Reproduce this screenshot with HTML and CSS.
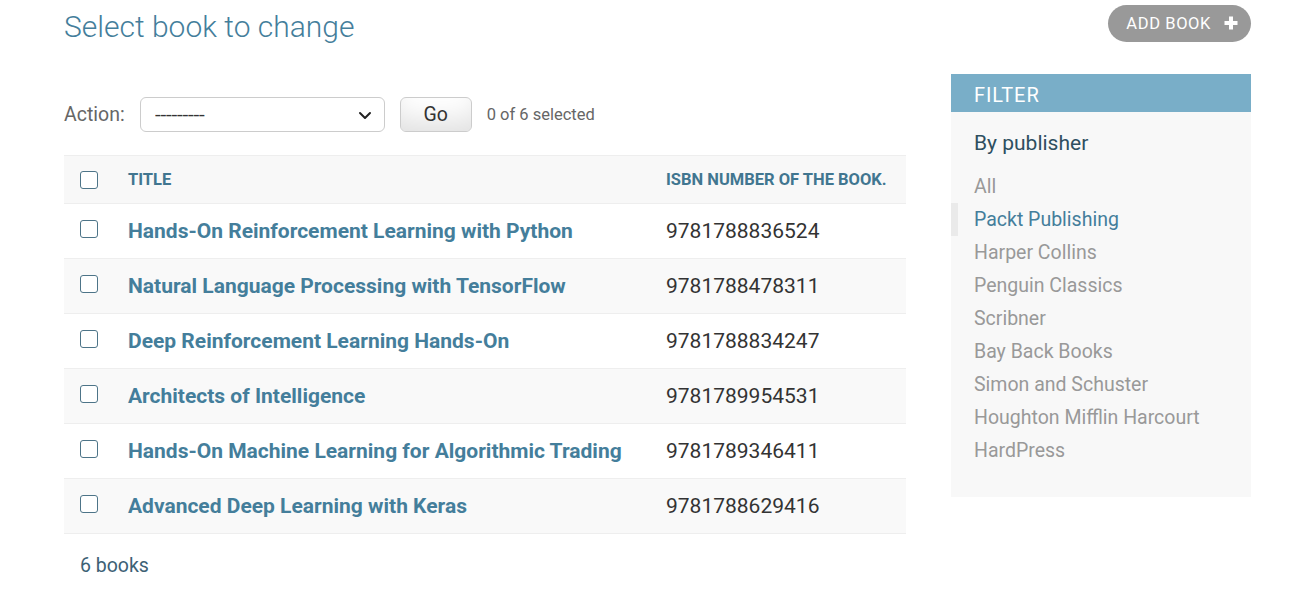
FILE: index.html
```html
<!DOCTYPE html>
<html lang="en">
<head>
<meta charset="utf-8">
<title>Select book to change</title>
<link rel="stylesheet" href="styles.css">
</head>
<body>
<div class="page">
  <header class="topbar">
    <h1 class="page-title">Select book to change</h1>
    <a class="add-btn" href="#">ADD BOOK
      <svg class="plus" width="14" height="14" viewBox="0 0 14 14" aria-hidden="true"><path d="M7 0.5v13M0.5 7h13" stroke="#fff" stroke-width="4" fill="none"/></svg>
    </a>
  </header>
  <div class="content">
    <main class="main">
      <div class="actions">
        <label class="action-label">Action:</label>
        <div class="select-wrap">
          <span class="select-value">---------</span>
          <svg class="chevron" width="14" height="9" viewBox="0 0 14 9" aria-hidden="true"><path d="M2 2l5 5 5-5" stroke="#222" stroke-width="2" fill="none" stroke-linecap="round" stroke-linejoin="round"/></svg>
        </div>
        <button class="go-btn" type="button">Go</button>
        <span class="counter">0 of 6 selected</span>
      </div>
      <table class="result-list">
        <thead>
          <tr>
            <th class="col-check"><span class="cb"></span></th>
            <th class="col-title">Title</th>
            <th class="col-isbn">ISBN number of the book.</th>
          </tr>
        </thead>
        <tbody>
          <tr><td class="col-check"><span class="cb"></span></td><td class="col-title"><a href="#">Hands-On Reinforcement Learning with Python</a></td><td class="col-isbn">9781788836524</td></tr>
          <tr><td class="col-check"><span class="cb"></span></td><td class="col-title"><a href="#">Natural Language Processing with TensorFlow</a></td><td class="col-isbn">9781788478311</td></tr>
          <tr><td class="col-check"><span class="cb"></span></td><td class="col-title"><a href="#">Deep Reinforcement Learning Hands-On</a></td><td class="col-isbn">9781788834247</td></tr>
          <tr><td class="col-check"><span class="cb"></span></td><td class="col-title"><a href="#">Architects of Intelligence</a></td><td class="col-isbn">9781789954531</td></tr>
          <tr><td class="col-check"><span class="cb"></span></td><td class="col-title"><a href="#">Hands-On Machine Learning for Algorithmic Trading</a></td><td class="col-isbn">9781789346411</td></tr>
          <tr><td class="col-check"><span class="cb"></span></td><td class="col-title"><a href="#">Advanced Deep Learning with Keras</a></td><td class="col-isbn">9781788629416</td></tr>
        </tbody>
      </table>
      <p class="paginator">6 books</p>
    </main>
    <aside class="filter">
      <h2 class="filter-head">FILTER</h2>
      <h3 class="filter-title">By publisher</h3>
      <ul class="filter-list">
        <li><a href="#">All</a></li>
        <li class="selected"><a href="#">Packt Publishing</a></li>
        <li><a href="#">Harper Collins</a></li>
        <li><a href="#">Penguin Classics</a></li>
        <li><a href="#">Scribner</a></li>
        <li><a href="#">Bay Back Books</a></li>
        <li><a href="#">Simon and Schuster</a></li>
        <li><a href="#">Houghton Mifflin Harcourt</a></li>
        <li><a href="#">HardPress</a></li>
      </ul>
    </aside>
  </div>
</div>
</body>
</html>
```
FILE: styles.css
```css
* { box-sizing: border-box; }
html, body { margin: 0; padding: 0; background: #fff; }
body {
  font-family: Roboto, "Liberation Sans", Arial, sans-serif;
  color: #333;
}
a { text-decoration: none; }

.page {
  padding: 5px 60px 0 64px;
}

.topbar {
  display: flex;
  justify-content: space-between;
  align-items: flex-start;
  height: 37px;
}
.page-title {
  margin: 4px 0 0;
  font-size: 30px;
  line-height: 36px;
  font-weight: 300;
  color: #447e9b;
}
.add-btn {
  display: flex;
  align-items: center;
  gap: 13px;
  height: 37px;
  padding: 0 13px 1px 18px;
  border-radius: 19px;
  background: #999;
  color: #fff;
  font-size: 16.5px;
  letter-spacing: 0.6px;
  font-weight: 400;
}
.plus { display: block; }

.content {
  display: flex;
  gap: 45px;
  margin-top: 32px;
}
.main {
  flex: 1;
  padding-top: 23px;
}

.actions {
  display: flex;
  align-items: center;
  height: 35px;
}
.action-label {
  font-size: 19.5px;
  color: #666;
  margin-right: 15px;
}
.select-wrap {
  position: relative;
  display: flex;
  align-items: center;
  width: 245px;
  height: 35px;
  border: 1px solid #ccc;
  border-radius: 6px;
  padding-left: 14px;
  background: #fff;
}
.select-value {
  font-size: 18px;
  color: #333;
  letter-spacing: -0.2px;
  transform: scaleX(1.15);
  transform-origin: left center;
}
.chevron {
  position: absolute;
  right: 12px;
  top: 13px;
}
.go-btn {
  margin-left: 15px;
  width: 72px;
  height: 35px;
  border: 1px solid #ccc;
  border-radius: 6px;
  background: #fff;
  box-shadow: inset 0 -22px 30px -12px rgba(0, 0, 0, 0.13);
  font-family: inherit;
  font-size: 19.5px;
  color: #333;
  padding: 0;
}
.counter {
  margin-left: 15px;
  font-size: 16.5px;
  color: #666;
}

.result-list {
  width: 100%;
  margin-top: 23px;
  border-collapse: collapse;
  border-top: 1px solid #eee;
}
.result-list th {
  height: 48px;
  background: #f8f8f8;
  text-align: left;
  font-size: 16.5px;
  font-weight: 700;
  text-transform: uppercase;
  color: #417690;
  padding: 0 8px;
  border-bottom: 1px solid #eee;
  vertical-align: middle;
}
.result-list td {
  height: 55px;
  padding: 0 8px;
  font-size: 21px;
  color: #333;
  border-bottom: 1px solid #eee;
  vertical-align: middle;
}
.result-list tbody tr:nth-child(even) td { background: #f9f9f9; }
.result-list .col-check {
  width: 56px;
  padding-left: 16px;
  padding-right: 0;
}
.result-list .col-isbn { width: 248px; }
.result-list td.col-title a {
  color: #447e9b;
  font-weight: 700;
}
.cb {
  display: block;
  width: 18px;
  height: 18px;
  border: 1.5px solid #4d7488;
  border-radius: 3px;
  background: #fff;
}
td .cb { margin-top: -4px; }

.paginator {
  margin: 0;
  padding: 20px 0 0 16px;
  font-size: 19.5px;
  line-height: 24px;
  color: #3d6175;
}

.filter {
  width: 300px;
  flex: none;
  height: 423px;
  background: #f8f8f8;
}
.filter-head {
  margin: 0;
  height: 38px;
  line-height: 38px;
  padding: 2px 23px 0;
  background: #79aec8;
  color: #fff;
  font-size: 20px;
  font-weight: 400;
  letter-spacing: 0.9px;
}
.filter-title {
  margin: 19px 0 0;
  padding: 0 23px;
  font-size: 21px;
  line-height: 24px;
  font-weight: 400;
  color: #2e4f60;
}
.filter-list {
  list-style: none;
  margin: 15px 0 0;
  padding: 0 0 0 23px;
}
.filter-list li {
  height: 33px;
  line-height: 33px;
  font-size: 19.5px;
}
.filter-list li a { color: #999; }
.filter-list li.selected {
  margin-left: -23px;
  padding-left: 16px;
  border-left: 7px solid #eaeaea;
}
.filter-list li.selected a { color: #447e9b; }
```
